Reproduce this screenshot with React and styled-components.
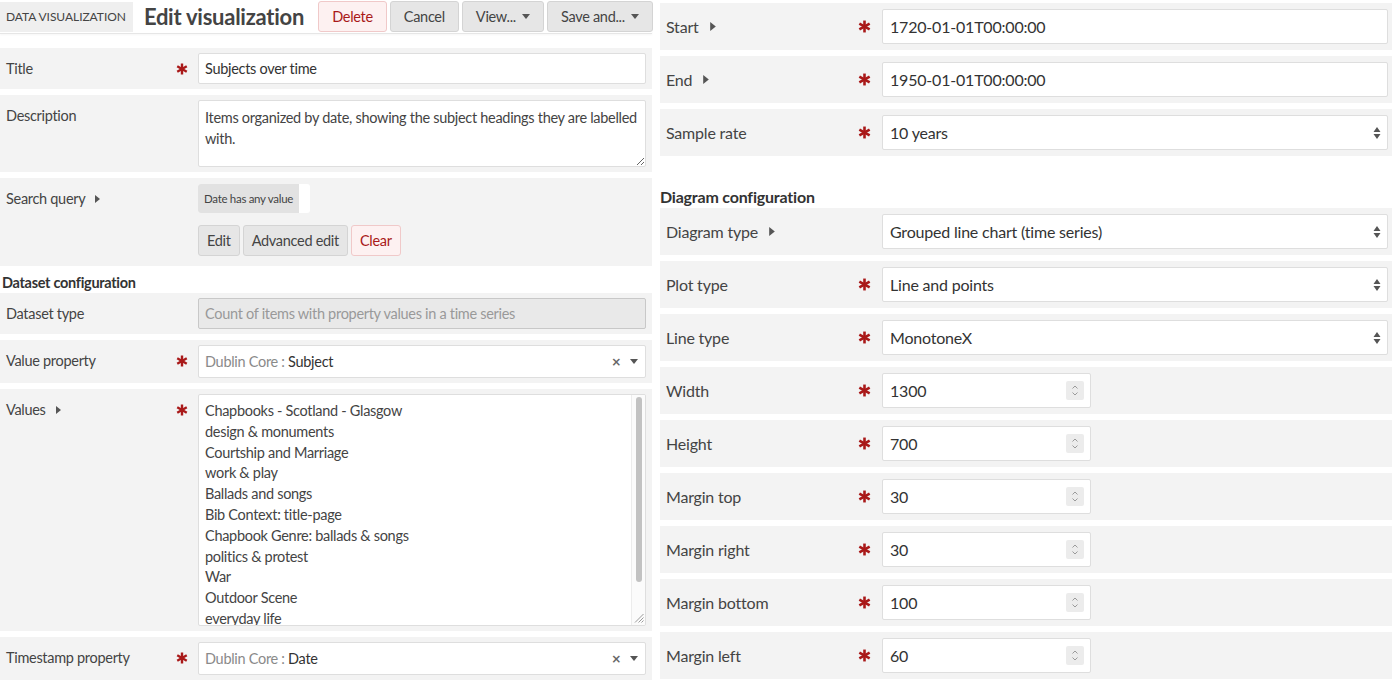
import React from "react";
import styled, { createGlobalStyle, css } from "styled-components";

const GlobalStyle = createGlobalStyle`
  html, body { margin: 0; padding: 0; background: #fff; }
  body { font-family: Lato, "Open Sans", "Liberation Sans", sans-serif; color: #444; }
  * { box-sizing: border-box; }
  #root { width: 1400px; height: 684px; overflow: hidden; }
`;

const Page = styled.div`
  display: flex;
  align-items: flex-start;
  gap: 8px;
  width: 1400px;
  height: 684px;
  overflow: hidden;
`;

const LeftPane = styled.div`
  width: 652px;
  flex: none;
  display: flex;
  flex-direction: column;
  font-size: 14.5px;
  letter-spacing: -0.3px;
`;

const RightPane = styled.div`
  width: 732px;
  flex: none;
  display: flex;
  flex-direction: column;
  padding-top: 3px;
  font-size: 16px;
  letter-spacing: -0.2px;
`;

/* ---------- header ---------- */
const Header = styled.header`
  display: flex;
  align-items: center;
  height: 34px;
  border-bottom: 1px solid #e6e6e6;
  box-shadow: 0 1px 2px rgba(0, 0, 0, 0.04);
  margin-bottom: 14px;
  white-space: nowrap;
`;

const SectionTag = styled.div`
  flex: none;
  display: flex;
  align-items: center;
  height: 30px;
  padding: 0 7px 0 6px;
  background: #efefef;
  font-size: 12px;
  text-transform: uppercase;
  color: #444;
  letter-spacing: -0.05px;
`;

const PageTitle = styled.h1`
  flex: none;
  margin: 0 14px 0 11px;
  font-size: 22px;
  font-weight: 700;
  color: #444;
  letter-spacing: -0.25px;
`;

const ButtonGroup = styled.div`
  flex: none;
  display: flex;
  gap: 3px;
`;

const Button = styled.button`
  display: inline-flex;
  align-items: center;
  gap: 6px;
  height: 31px;
  padding: 0 ${(p) => (p.$compact ? 8 : 13)}px;
  font-family: inherit;
  font-size: 14.5px;
  letter-spacing: -0.3px;
  white-space: nowrap;
  color: #444;
  background: #e6e6e6;
  border: 1px solid #d4d4d4;
  border-radius: 3px;
  cursor: pointer;
  ${(p) =>
    p.$danger &&
    css`
      color: #a91919;
      background: #fdf1f1;
      border-color: #f0c9c9;
    `}
`;

const Caret = () => (
  <svg width="8" height="5" viewBox="0 0 8 5">
    <path d="M0 0h8L4 5z" fill="#555" />
  </svg>
);

/* ---------- form rows ---------- */
const Row = styled.div`
  display: grid;
  grid-template-columns: ${(p) => (p.$big ? "184px 32px 1fr" : "164px 28px 1fr")};
  align-items: start;
  padding: ${(p) => (p.$big ? "6px 4px 6px 6px" : "5px 6px")};
  margin-bottom: 6px;
  background: #f3f3f3;
`;

const Label = styled.div`
  display: flex;
  align-items: center;
  gap: ${(p) => (p.$big ? 11 : 10)}px;
  line-height: ${(p) => (p.$big ? 35 : 31)}px;
  color: #444;
  white-space: nowrap;
`;

const Required = styled.div`
  display: flex;
  justify-content: center;
  align-items: center;
  height: ${(p) => (p.$big ? 35 : 31)}px;
  padding-right: 4px;
`;

const Heading = styled.h3`
  margin: ${(p) => (p.$big ? "25px 0 1px 0" : "0")};
  padding-left: ${(p) => (p.$big ? 0 : 2)}px;
  font-size: ${(p) => (p.$big ? 16 : 14.5)}px;
  line-height: ${(p) => (p.$big ? 20 : 21)}px;
  font-weight: 700;
  color: #333;
`;

const fieldBase = css`
  font-family: inherit;
  font-size: inherit;
  letter-spacing: inherit;
  color: #333;
  background: #fff;
  border: 1px solid #dedede;
  border-radius: 2px;
  outline: none;
`;

const TextInput = styled.input`
  ${fieldBase};
  width: 100%;
  height: ${(p) => (p.$big ? 35 : 31)}px;
  padding: 0 7px 0 ${(p) => (p.$big ? 7 : 6)}px;
  ${(p) =>
    p.disabled &&
    css`
      background: #e9e9e9;
      border-color: #c8c8c8;
      color: #999;
    `}
`;

const TextArea = styled.textarea`
  ${fieldBase};
  display: block;
  width: 100%;
  height: 67px;
  padding: 6px 6px;
  line-height: 21px;
  resize: vertical;
  color: #444;
`;

/* values list drawn as a textarea with its scroll track */
const ValuesBox = styled.div`
  ${fieldBase};
  display: flex;
  height: 232px;
  overflow: hidden;
`;

const ValuesList = styled.div`
  flex: 1;
  padding: 6px 6px 0;
  line-height: 20.8px;
  color: #444;
  white-space: pre;
`;

const ScrollTrack = styled.div`
  flex: none;
  width: 14px;
  display: flex;
  flex-direction: column;
  align-items: center;
  padding: 2px 0 2px;
  background: #fbfbfb;
  border-left: 1px solid #ececec;
`;

const ScrollThumb = styled.div`
  width: 6px;
  height: 185px;
  border-radius: 4px;
  background: #c2c2c2;
`;

const Fill = styled.div`
  flex: 1;
`;

const Grip = () => (
  <svg width="11" height="11" viewBox="0 0 11 11">
    <g stroke="#9a9a9a" strokeWidth="1">
      <line x1="10.5" y1="2" x2="2" y2="10.5" />
      <line x1="10.5" y1="5.5" x2="5.5" y2="10.5" />
      <line x1="10.5" y1="8.5" x2="8.5" y2="10.5" />
    </g>
  </svg>
);

const ChosenSelect = styled.div`
  ${fieldBase};
  display: flex;
  align-items: center;
  height: 33px;
  padding: 0 7px 0 6px;
  color: #333;
`;

const Muted = styled.span`
  color: #8a8a8a;
  white-space: pre;
`;

const Grow = styled.span`
  flex: 1;
  white-space: nowrap;
`;

const ClearX = styled.span`
  font-family: "DejaVu Sans", sans-serif;
  font-size: 12px;
  font-weight: 700;
  color: #666;
  margin-right: 9px;
`;

const NativeSelect = styled.div`
  ${fieldBase};
  display: flex;
  align-items: center;
  height: 35px;
  padding: 0 6px 0 7px;
`;

const NumberBox = styled.div`
  ${fieldBase};
  display: flex;
  align-items: center;
  width: 209px;
  height: 35px;
  padding: 0 6px 0 7px;
`;

const Spinner = styled.span`
  display: flex;
  width: 18px;
  height: 19px;
  background: #ececec;
  border-radius: 2px;
  align-items: center;
  justify-content: center;
`;

const SpinIcon = () => (
  <Spinner>
    <svg width="8" height="13" viewBox="0 0 8 13">
      <path d="M1.5 4.5L4 2l2.5 2.5M1.5 8.5L4 11l2.5-2.5" fill="none" stroke="#9a9a9a" strokeWidth="1" />
    </svg>
  </Spinner>
);

const UpDown = () => (
  <svg width="8" height="14" viewBox="0 0 8 14">
    <path d="M4 1L7.5 6h-7z M4 13L0.5 8h7z" fill="#555" />
  </svg>
);

const Expand = ({ big }) => (
  <svg width={big ? 6 : 5} height={big ? 9 : 8} viewBox="0 0 5 8">
    <path d="M0 0L5 4 0 8z" fill="#555" />
  </svg>
);

const Star = ({ size = 12 }) => (
  <svg width={size} height={size} viewBox="0 0 12 12">
    <g stroke="#a91919" strokeWidth="2.4" strokeLinecap="butt">
      <line x1="6" y1="0.5" x2="6" y2="11.5" />
      <line x1="1.24" y1="3.25" x2="10.76" y2="8.75" />
      <line x1="1.24" y1="8.75" x2="10.76" y2="3.25" />
    </g>
  </svg>
);

/* ---------- search query ---------- */
const QueryStack = styled.div`
  display: flex;
  flex-direction: column;
  align-items: flex-start;
  gap: 12px;
  padding: 1px 0 5px;
`;

const QueryPill = styled.span`
  display: inline-flex;
  height: 29px;
  background: #fff;
  border-radius: 3px;
  padding-right: 11px;
`;

const QueryText = styled.span`
  display: flex;
  align-items: center;
  padding: 0 6px;
  background: #e2e2e2;
  border-radius: 3px 0 0 3px;
  font-size: 11.5px;
  letter-spacing: -0.3px;
  color: #444;
`;

/* ---------- data ---------- */
const valueLines = [
  "Chapbooks - Scotland - Glasgow",
  "design & monuments",
  "Courtship and Marriage",
  "work & play",
  "Ballads and songs",
  "Bib Context: title-page",
  "Chapbook Genre: ballads & songs",
  "politics & protest",
  "War",
  "Outdoor Scene",
  "everyday life",
];

const FieldRow = ({ big, label, expand, required, children }) => (
  <Row $big={big}>
    <Label $big={big}>
      {label}
      {expand && <Expand big={big} />}
    </Label>
    <Required $big={big}>{required && <Star size={big ? 13 : 12} />}</Required>
    <div>{children}</div>
  </Row>
);

const SelectField = ({ value }) => (
  <NativeSelect>
    <Grow>{value}</Grow>
    <UpDown />
  </NativeSelect>
);

const NumberField = ({ value }) => (
  <NumberBox>
    <Grow>{value}</Grow>
    <SpinIcon />
  </NumberBox>
);

const PropertySelect = ({ value }) => (
  <ChosenSelect>
    <Muted>Dublin Core : </Muted>
    <Grow>{value}</Grow>
    <ClearX>×</ClearX>
    <Caret />
  </ChosenSelect>
);

export default function App() {
  return (
    <>
      <GlobalStyle />
      <Page>
        <LeftPane>
          <Header>
            <SectionTag>Data Visualization</SectionTag>
            <PageTitle>Edit visualization</PageTitle>
            <ButtonGroup>
              <Button $danger>Delete</Button>
              <Button>Cancel</Button>
              <Button>
                View... <Caret />
              </Button>
              <Button>
                Save and... <Caret />
              </Button>
            </ButtonGroup>
          </Header>

          <FieldRow label="Title" required>
            <TextInput defaultValue="Subjects over time" />
          </FieldRow>

          <FieldRow label="Description">
            <TextArea defaultValue="Items organized by date, showing the subject headings they are labelled with." />
          </FieldRow>

          <FieldRow label="Search query" expand>
            <QueryStack>
              <QueryPill>
                <QueryText>Date has any value</QueryText>
              </QueryPill>
              <ButtonGroup>
                <Button $compact>Edit</Button>
                <Button $compact>Advanced edit</Button>
                <Button $compact $danger>
                  Clear
                </Button>
              </ButtonGroup>
            </QueryStack>
          </FieldRow>

          <Heading>Dataset configuration</Heading>

          <FieldRow label="Dataset type">
            <TextInput disabled defaultValue="Count of items with property values in a time series" />
          </FieldRow>

          <FieldRow label="Value property" required>
            <PropertySelect value="Subject" />
          </FieldRow>

          <FieldRow label="Values" expand required>
            <ValuesBox>
              <ValuesList>{valueLines.join("\n")}</ValuesList>
              <ScrollTrack>
                <ScrollThumb />
                <Fill />
                <Grip />
              </ScrollTrack>
            </ValuesBox>
          </FieldRow>

          <FieldRow label="Timestamp property" required>
            <PropertySelect value="Date" />
          </FieldRow>
        </LeftPane>

        <RightPane>
          <FieldRow big label="Start" expand required>
            <TextInput $big defaultValue="1720-01-01T00:00:00" />
          </FieldRow>
          <FieldRow big label="End" expand required>
            <TextInput $big defaultValue="1950-01-01T00:00:00" />
          </FieldRow>
          <FieldRow big label="Sample rate" required>
            <SelectField value="10 years" />
          </FieldRow>

          <Heading $big>Diagram configuration</Heading>

          <FieldRow big label="Diagram type" expand>
            <SelectField value="Grouped line chart (time series)" />
          </FieldRow>
          <FieldRow big label="Plot type" required>
            <SelectField value="Line and points" />
          </FieldRow>
          <FieldRow big label="Line type" required>
            <SelectField value="MonotoneX" />
          </FieldRow>
          <FieldRow big label="Width" required>
            <NumberField value="1300" />
          </FieldRow>
          <FieldRow big label="Height" required>
            <NumberField value="700" />
          </FieldRow>
          <FieldRow big label="Margin top" required>
            <NumberField value="30" />
          </FieldRow>
          <FieldRow big label="Margin right" required>
            <NumberField value="30" />
          </FieldRow>
          <FieldRow big label="Margin bottom" required>
            <NumberField value="100" />
          </FieldRow>
          <FieldRow big label="Margin left" required>
            <NumberField value="60" />
          </FieldRow>
        </RightPane>
      </Page>
    </>
  );
}
